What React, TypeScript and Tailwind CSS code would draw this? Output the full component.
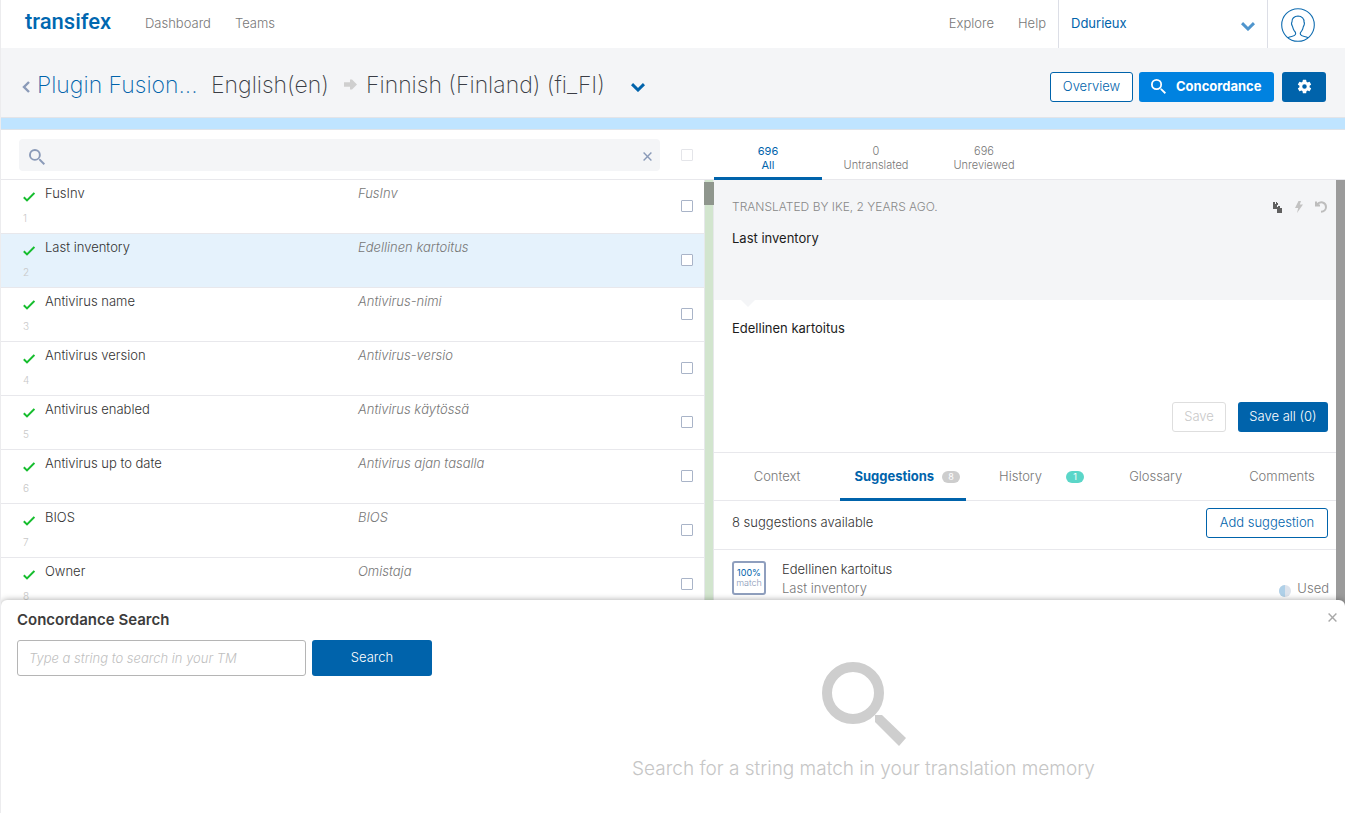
import React from "react";

type Row = { source: string; target: string };

const rows: Row[] = [
  { source: "FusInv", target: "FusInv" },
  { source: "Last inventory", target: "Edellinen kartoitus" },
  { source: "Antivirus name", target: "Antivirus-nimi" },
  { source: "Antivirus version", target: "Antivirus-versio" },
  { source: "Antivirus enabled", target: "Antivirus käytössä" },
  { source: "Antivirus up to date", target: "Antivirus ajan tasalla" },
  { source: "BIOS", target: "BIOS" },
  { source: "Owner", target: "Omistaja" },
];

const SearchIcon = ({ className }: { className: string }) => (
  <svg viewBox="0 0 84 84" className={className} fill="none" stroke="currentColor" aria-hidden="true">
    <circle cx="31" cy="31" r="26" strokeWidth="10" />
    <path d="M53 53v7l24 24 7-8-24-23z" fill="currentColor" stroke="none" />
  </svg>
);

const CheckIcon = () => (
  <svg viewBox="0 0 12 10" className="h-[10px] w-3" fill="none" stroke="#15bd2d" strokeWidth="2" aria-hidden="true">
    <path d="M0.8 5.2 4 8.4 11.4 1" />
  </svg>
);

const Chevron = ({ className }: { className: string }) => (
  <svg viewBox="0 0 14 9" className={className} fill="none" stroke="currentColor" strokeWidth="3" aria-hidden="true">
    <path d="m1 1.2 6 5.8 6-5.8" />
  </svg>
);

const CloseIcon = () => (
  <svg viewBox="0 0 9 9" className="size-[9px]" fill="none" stroke="currentColor" strokeWidth="1.4" aria-hidden="true">
    <path d="m.6.6 7.8 7.8M8.4.6.6 8.4" />
  </svg>
);

function TopBar() {
  return (
    <header className="flex h-12 shrink-0 items-stretch bg-white text-[13px] font-light text-[#777]">
      <a
        href="#home"
        className="flex w-[120px] items-center pb-1 pl-6 font-['Roboto',sans-serif] text-[22px] leading-6 font-medium text-[#0067b0]"
      >
        transifex
      </a>
      <nav className="flex flex-1 items-center gap-6 pl-6">
        <a href="#dashboard">Dashboard</a>
        <a href="#teams">Teams</a>
      </nav>
      <nav className="flex items-center gap-6 pr-3">
        <a href="#explore">Explore</a>
        <a href="#help">Help</a>
      </nav>
      <button
        type="button"
        className="flex w-[210px] items-center justify-between border-x border-[#dcdee6] px-3 font-normal text-[#0063ab]"
      >
        Ddurieux
        <Chevron className="mt-1 h-[9px] w-[14px] text-[#4f95cd]" />
      </button>
      <button type="button" aria-label="Profile" className="flex w-[77px] items-center pt-[2px] pl-[13px]">
        <svg viewBox="0 0 34 34" className="size-[34px]" fill="none" stroke="#0f6cb0" strokeWidth="1.1">
          <circle cx="17" cy="17" r="16.3" />
          <path d="M7 29.8c2.800-1.700 6.200-.9 7.400-3.200.8-1.700-.2-3-1.400-4.300-1.200-1.500-1-2.800-1.500-3.800-1-1.700-1.300-3.600-.5-4.800-.3-3 2.200-5.600 6-5.700 4 .2 6.300 2.800 6 5.900.8 1.200.4 3-.6 4.700-.5 1-.3 2.200-1.400 3.700-1.200 1.300-2.200 2.600-1.500 4.300 1.100 2.300 4.800 1.500 7.500 3.200" />
        </svg>
      </button>
    </header>
  );
}

function ProjectBar() {
  return (
    <div className="flex h-[70px] shrink-0 items-center border-b border-[#e3e4e8] bg-[#f4f5f7] pr-[19px] pl-5 text-[#3a3d45]">
      <h1 className="flex flex-1 items-center pt-1 text-[23px] leading-8 font-extralight">
        <svg viewBox="0 0 8 12" className="mt-1 h-3 w-[10px]" fill="none" stroke="#8a9ab8" strokeWidth="2.4" aria-hidden="true">
          <path d="M7 1 2 6l5 5" />
        </svg>
        <a href="#project" className="w-[180px] pl-[6px] text-[#0063ab]">
          Plugin Fusion...
        </a>
        <span className="w-[133px]">English(en)</span>
        <svg viewBox="0 0 13 11" className="h-[11px] w-[13px]" fill="#cfcfcf" aria-hidden="true">
          <path d="M0 3.200h6V0.500h2l5 5-5 5H6V7.800H0z" />
        </svg>
        <button type="button" className="flex items-center gap-[26px] pl-[9px]">
          Finnish (Finland) (fi_FI)
          <Chevron className="mt-[6px] h-[9px] w-[14px] text-[#0063ab]" />
        </button>
      </h1>
      <div className="flex pt-2 text-[13px]">
        <button type="button" className="h-[30px] w-[83px] rounded-[3px] border border-[#0063ab] bg-white font-light text-[#0063ab]">
          Overview
        </button>
        <button
          type="button"
          className="ml-[6px] flex h-[30px] w-[135px] items-center gap-[10px] rounded-[3px] bg-[#0082e0] pl-3 font-bold text-white"
        >
          <SearchIcon className="size-[15px]" />
          Concordance
        </button>
        <button type="button" aria-label="Settings" className="ml-2 flex h-[30px] w-11 items-center justify-center rounded-[3px] bg-[#0063ab]">
          <svg viewBox="0 0 24 24" className="size-[17px]" fill="#fff" aria-hidden="true">
            <path d="M19.140 12.940c.04-.3.06-.61.06-.94s-.02-.64-.07-.94l2.030-1.580a.49.49 0 0 0 .12-.61l-1.920-3.320a.49.49 0 0 0-.59-.22l-2.390.96a7 7 0 0 0-1.620-.94l-.36-2.540a.48.48 0 0 0-.48-.41h-3.840a.47.47 0 0 0-.47.41l-.36 2.540a7 7 0 0 0-1.620.94l-2.390-.96a.48.48 0 0 0-.59.22L2.740 8.870a.47.47 0 0 0 .12.61l2.030 1.580a6 6 0 0 0 0 1.880l-2.030 1.580a.49.49 0 0 0-.12.61l1.920 3.320c.12.22.37.29.59.22l2.390-.96a7 7 0 0 0 1.620.94l.36 2.540c.05.24.24.41.48.41h3.840c.24 0 .44-.17.47-.41l.36-2.540a7 7 0 0 0 1.620-.94l2.390.96c.22.08.47 0 .59-.22l1.920-3.320a.47.47 0 0 0-.12-.61zM12 15.200a3.200 3.200 0 1 1 0-6.400 3.200 3.200 0 0 1 0 6.400z" />
          </svg>
        </button>
      </div>
    </div>
  );
}

function StringList() {
  return (
    <section className="min-w-0">
      <div className="flex h-[50px] items-center border-b border-[#e8e8ec] pl-[18px]">
        <label className="flex h-8 flex-1 items-center rounded-[4px] bg-[#f4f5f7] pr-2 pl-[10px] text-[#8a9ab8]">
          <SearchIcon className="mt-1 size-4" />
          <input type="text" aria-label="Search strings" className="min-w-0 flex-1 bg-transparent px-2 text-[13px] outline-none" />
          <button type="button" aria-label="Clear search" className="pt-1">
            <CloseIcon />
          </button>
        </label>
        <input
          type="checkbox"
          aria-label="Select all"
          className="mr-[21px] ml-[21px] size-3 appearance-none rounded-[1px] border border-[#e4e5e9] bg-white"
        />
      </div>
      <div className="flex">
        <ul className="min-w-0 flex-1">
          {rows.map((row, i) => (
            <li
              key={row.source}
              className={
                i === 1
                  ? "flex h-[54px] items-start border-b border-[#e8e8ec] bg-[#e5f2fc] pl-[22px]"
                  : "flex h-[54px] items-start border-b border-[#e8e8ec] bg-white pl-[22px]"
              }
            >
              <div className="w-[22px] pt-3">
                <CheckIcon />
                <span className="mt-2 block text-[10px] leading-4 font-light text-[#c8c8c8]">{i + 1}</span>
              </div>
              <p className="min-w-0 flex-[313] pt-[3px] text-[13px] leading-5 font-light text-[#333]">{row.source}</p>
              <p className="min-w-0 flex-[323] pt-[3px] text-[13px] leading-5 font-light text-[#777] italic">{row.target}</p>
              <input
                type="checkbox"
                aria-label={row.source}
                className="mt-5 mr-[11px] size-3 appearance-none rounded-[1px] border border-[#a9b4c8] bg-white"
              />
            </li>
          ))}
        </ul>
        <div className="w-[10px] border-x border-[#e6e8ea] bg-[#d2e5ce]">
          <div className="-mx-px mt-[2px] h-[23px] bg-[#8f968d]" />
        </div>
      </div>
    </section>
  );
}

function FilterTabs() {
  return (
    <div className="flex h-[50px] border-b border-[#e8e8ec] text-[11px] leading-[14px] font-light text-[#777]">
      <button type="button" className="-mb-px w-[108px] border-b-[3px] border-[#0063ab] pt-2 font-normal text-[#0063ab]">
        <span className="block">696</span>All
      </button>
      <button type="button" className="w-[108px] pt-[6px]">
        <span className="block">0</span>Untranslated
      </button>
      <button type="button" className="w-[108px] pt-[6px]">
        <span className="block">696</span>Unreviewed
      </button>
    </div>
  );
}

function Editor() {
  return (
    <section className="flex min-w-0 flex-col">
      <FilterTabs />
      <div className="relative flex-1">
        <div className="relative h-[120px] bg-[#f4f5f7] px-[18px] pt-[18px]">
          <div className="flex items-center">
            <p className="flex-1 text-[12px] leading-[18px] font-light text-[#888]">TRANSLATED BY IKE, 2 YEARS AGO.</p>
            <div className="flex items-center gap-[9px]">
              <button type="button" aria-label="Copy source">
                <svg viewBox="0 0 10 11" className="h-[11px] w-[10px]" fill="#606060">
                  <path d="M0 0h2v2h1V0h1v1h1v2H4v4H0zM5 4h2v2h2v5H4V5h1z" />
                </svg>
              </button>
              <button type="button" aria-label="Machine translation" className="px-[3px]">
                <svg viewBox="0 0 8 12" className="h-3 w-2" fill="#c2c2c2">
                  <path d="M3.500 0h2.500L4.800 3.500H8L2 12l1.200-5H0z" />
                </svg>
              </button>
              <button type="button" aria-label="Undo">
                <svg viewBox="0 0 12 12" className="size-3" fill="none" stroke="#bdbdbd" strokeWidth="2">
                  <path d="M2 3.500C5-.2 11 1 11 6c0 2.500-2 4.800-5 4.800M1 .5v4h4" />
                </svg>
              </button>
            </div>
          </div>
          <p className="mt-3 text-[13px] leading-5 text-[#1c1c1c]">Last inventory</p>
          <svg viewBox="0 0 14 7" className="absolute top-full left-[27px] h-[7px] w-[14px]" fill="#f4f5f7" aria-hidden="true">
            <path d="M0 0h14L7 7z" />
          </svg>
        </div>
        <div className="flex h-[152px] flex-col pt-[18px] pr-[17px] pl-[18px]">
          <textarea
            aria-label="Translation"
            defaultValue="Edellinen kartoitus"
            className="w-full flex-1 resize-none text-[13px] leading-5 text-[#1c1c1c] outline-none"
          />
          <div className="flex justify-end gap-3 pb-5 text-[13px] font-light">
            <button type="button" disabled className="h-[30px] w-[54px] rounded-[3px] border border-[#dedede] text-[#c8c8c8]">
              Save
            </button>
            <button type="button" className="h-[30px] w-[90px] rounded-[3px] bg-[#0063ab] text-white">
              Save all (0)
            </button>
          </div>
        </div>
        <div className="grid h-[49px] grid-cols-5 border-y border-[#e8e8ec] text-[13px] font-light text-[#777]">
          <button type="button">Context</button>
          <button
            type="button"
            className="-mb-px flex items-center justify-center gap-2 border-b-[3px] border-[#0063ab] pt-[2px] pl-2 font-bold text-[#0063ab]"
          >
            Suggestions
            <span className="w-[18px] rounded-full bg-[#cdcdcd] text-[9px] leading-3 font-normal text-white">8</span>
          </button>
          <button type="button" className="flex items-center justify-center gap-6 pl-6">
            History
            <span className="w-[18px] rounded-full bg-[#5bd6c8] text-[9px] leading-3 font-normal text-white">1</span>
          </button>
          <button type="button">Glossary</button>
          <button type="button">Comments</button>
        </div>
        <div className="flex h-[49px] items-center justify-between border-b border-[#e8e8ec] pr-[17px] pb-1 pl-[18px] text-[13px] font-light">
          <p className="text-[#333]">8 suggestions available</p>
          <button type="button" className="h-[30px] w-[122px] rounded-[3px] border border-[#0063ab] text-[#0063ab]">
            Add suggestion
          </button>
        </div>
        <div className="flex items-start pt-[11px] pr-4 pl-[18px] text-[13px] leading-[19px] font-light text-[#777]">
          <div className="flex h-[34px] w-[34px] flex-col items-center justify-center rounded-[3px] border-2 border-[#8f9fbe] text-[9px] leading-[10px] text-[#8a9ab8]">
            <span className="font-normal text-[#0063ab]">100%</span>
            match
          </div>
          <div className="-mt-px flex-1 pl-4">
            <p className="text-[#333]">Edellinen kartoitus</p>
            <p>Last inventory</p>
          </div>
          <div className="flex items-center gap-[6px] pt-[18px]">
            <svg viewBox="0 0 12 12" className="mt-1 size-3" aria-hidden="true">
              <circle cx="6" cy="6" r="6" fill="#dde3ec" />
              <path d="M6 0a6 6 0 0 0 0 12z" fill="#afd0e8" />
            </svg>
            Used
          </div>
        </div>
        <div className="absolute inset-y-0 right-0 w-[9px] bg-[#9b9b9b]" />
      </div>
    </section>
  );
}

function ConcordancePanel() {
  return (
    <section className="absolute inset-x-0 bottom-0 flex h-[213px] rounded-t-[6px] bg-white shadow-[0_0_6px_rgba(0,0,0,0.35)]">
      <form className="ml-4 w-[415px] shrink-0 pt-[10px]" onSubmit={(e) => e.preventDefault()}>
        <h2 className="text-[15px] leading-5 font-semibold text-[#3c3c3c]">Concordance Search</h2>
        <div className="mt-[10px] flex gap-[6px]">
          <input
            type="text"
            aria-label="Concordance search"
            placeholder="Type a string to search in your TM"
            className="h-9 min-w-0 flex-1 rounded-[3px] border border-[#b5b5b5] px-[11px] text-[13px] font-light outline-none placeholder:text-[#bfbfbf] placeholder:italic"
          />
          <button type="submit" className="h-9 w-[120px] rounded-[3px] bg-[#0063ab] text-[13px] font-light text-white">
            Search
          </button>
        </div>
      </form>
      <div className="flex flex-1 flex-col items-center pt-[62px] pr-[50px] text-[#cecece]">
        <SearchIcon className="size-[84px]" />
        <p className="mt-[9px] text-[19px] leading-7 font-light text-[#c6c6c6]">Search for a string match in your translation memory</p>
      </div>
      <button type="button" aria-label="Close" className="absolute top-[13px] right-2 text-[#a8a8a8]">
        <CloseIcon />
      </button>
    </section>
  );
}

export default function App() {
  return (
    <div className="relative flex h-screen flex-col overflow-hidden border-l border-[#ececee] bg-white font-['Inter',sans-serif]">
      <TopBar />
      <ProjectBar />
      <div className="h-3 shrink-0 border-b border-[#dfe3e8] bg-[#bfe4ff]" />
      <main className="grid min-h-0 flex-1 grid-cols-[713fr_631fr]">
        <StringList />
        <Editor />
      </main>
      <ConcordancePanel />
    </div>
  );
}
